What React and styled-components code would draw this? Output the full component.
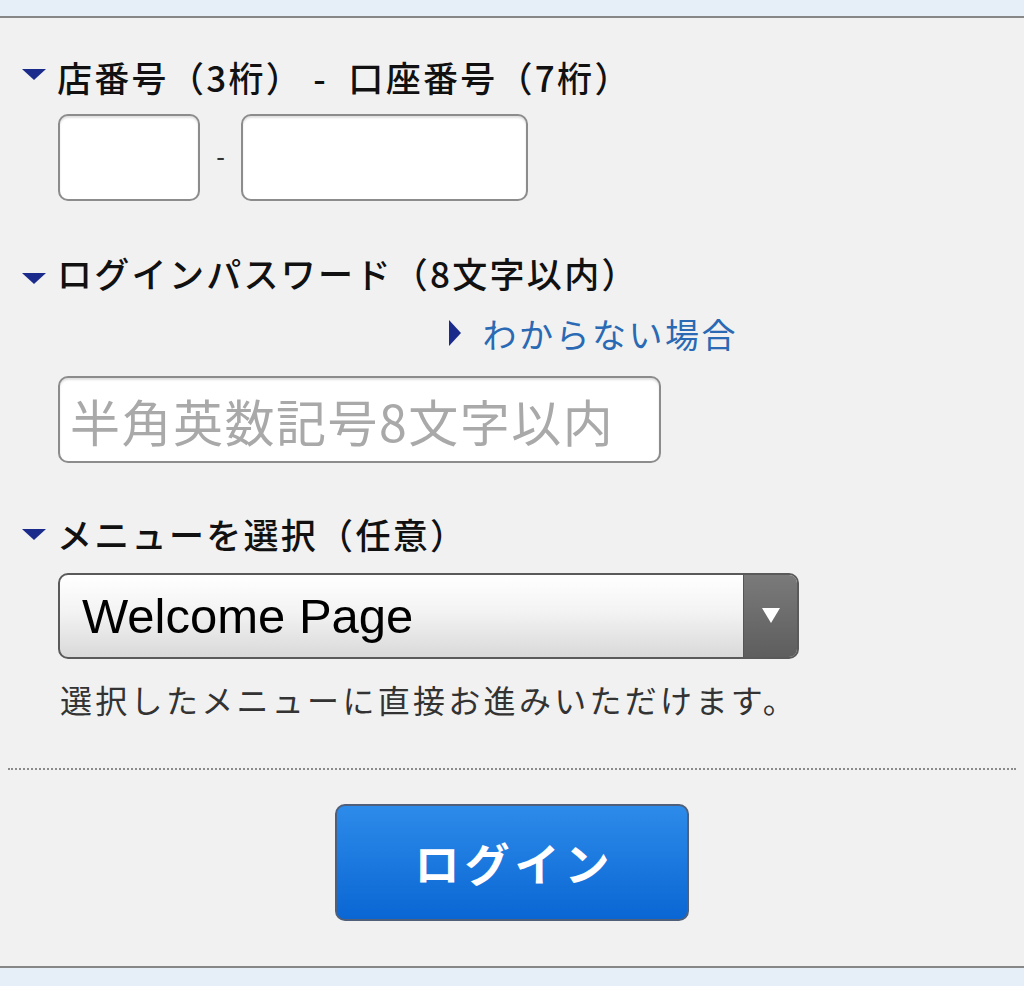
import React from "react";
import styled, { createGlobalStyle } from "styled-components";

const Global = createGlobalStyle`
  html, body { margin: 0; padding: 0; background: #e6eef8; }
  body { font-family: "Noto Sans CJK JP", "Noto Sans", sans-serif; }
  * { box-sizing: border-box; }
`;

const Page = styled.div`
  width: 1024px;
  height: 986px;
  display: flex;
  flex-direction: column;
  background: #e6eef8;
`;

const Band = styled.div`
  height: ${(p) => p.$h}px;
  background: #e6eef8;
  flex: none;
`;

const Panel = styled.div`
  flex: 1;
  background: #f1f1f1;
  border-top: 2px solid #878787;
  border-bottom: 2px solid #878787;
  padding: 38px 8px 0;
  display: flex;
  flex-direction: column;
`;

const Section = styled.div`
  display: flex;
  flex-direction: column;
  padding-left: 14px;
  margin-top: ${(p) => p.$mt || 0}px;
`;

const Heading = styled.div`
  display: flex;
  align-items: center;
  height: 40px;
  font-family: "Noto Sans CJK JP", serif;
  font-size: 35px;
  font-weight: 500;
  color: #111;
  letter-spacing: 2.3px;
  white-space: pre;
`;

const Tri = styled.svg`
  width: 24px;
  height: 12px;
  flex: none;
  margin-right: 11px;
  margin-top: ${(p) => p.$drop || 0}px;
`;

const Marker = ({ drop }) => (
  <Tri viewBox="0 0 24 12" $drop={drop}>
    <polygon points="0,0 24,0 12,11" fill="#1b2b8c" />
  </Tri>
);

const Row = styled.div`
  display: flex;
  align-items: center;
  margin-top: ${(p) => p.$mt || 0}px;
  padding-left: 36px;
`;

const Field = styled.div`
  width: ${(p) => p.$w}px;
  height: 87px;
  background: #fff;
  border: 2px solid #8c8c8c;
  border-radius: 10px;
  box-shadow: inset 0 2px 2px rgba(0, 0, 0, 0.12);
  display: flex;
  align-items: center;
  padding-left: 10px;
  font-size: 50px;
  color: #a9a9a9;
  white-space: nowrap;
  letter-spacing: 1.5px;
`;

const Dash = styled.span`
  width: 41px;
  text-align: center;
  font-size: 26px;
  color: #333;
  font-family: "Liberation Sans", sans-serif;
`;

const LinkRow = styled.div`
  display: flex;
  justify-content: flex-end;
  align-items: center;
  width: 716px;
  height: 40px;
  margin-top: 21px;
`;

const LinkText = styled.a`
  display: flex;
  align-items: center;
  color: #2a69b3;
  font-size: 34px;
  letter-spacing: 2.5px;
  text-decoration: none;
`;

const SmallTri = styled.svg`
  width: 12px;
  height: 26px;
  margin-right: 22px;
`;

const Select = styled.div`
  width: 741px;
  height: 86px;
  border: 2px solid #5a5a5a;
  border-radius: 10px;
  background: linear-gradient(#ffffff 0%, #f3f3f3 45%, #d9d9d9 100%);
  display: flex;
  overflow: hidden;
`;

const SelectLabel = styled.div`
  flex: 1;
  display: flex;
  align-items: center;
  padding-left: 22px;
  font-family: "Liberation Sans", Arial, sans-serif;
  font-size: 49px;
  color: #000;
`;

const SelectArrow = styled.div`
  width: 54px;
  border-left: 1px solid #555;
  background: linear-gradient(#7a7a7a, #5e5e5e);
  display: flex;
  align-items: center;
  justify-content: center;
`;

const Help = styled.div`
  margin-top: 20px;
  padding-left: 38px;
  height: 40px;
  display: flex;
  align-items: center;
  font-size: 32px;
  color: #333;
  letter-spacing: 3.3px;
  white-space: nowrap;
`;

const Divider = styled.hr`
  margin: 49px 0 0;
  border: none;
  border-top: 2px dotted #8a8a8a;
  width: 1008px;
  height: 0;
`;

const ButtonWrap = styled.div`
  display: flex;
  justify-content: center;
  margin-top: 34px;
`;

const LoginButton = styled.button`
  width: 354px;
  height: 117px;
  border: 2px solid #50607a;
  border-radius: 10px;
  background: linear-gradient(#2d8bea, #0a66d3);
  color: #fff;
  font-family: "Noto Sans CJK JP", sans-serif;
  font-size: 45px;
  font-weight: 700;
  letter-spacing: 5px;
  cursor: pointer;
  padding: 0 0 0 5px;
`;

export default function App() {
  return (
    <Page>
      <Global />
      <Band $h={16} />
      <Panel>
        <Section>
          <Heading>
            <Marker drop={-2} />
            {"店番号（3桁） -  口座番号（7桁）"}
          </Heading>
          <Row $mt={18}>
            <Field $w={142} />
            <Dash>-</Dash>
            <Field $w={287} />
          </Row>
        </Section>

        <Section $mt={51}>
          <Heading>
            <Marker drop={14} />
            ログインパスワード（8文字以内）
          </Heading>
          <LinkRow>
            <LinkText href="#">
              <SmallTri viewBox="0 0 12 26">
                <polygon points="0,0 12,13 0,26" fill="#1b2b8c" />
              </SmallTri>
              わからない場合
            </LinkText>
          </LinkRow>
          <Row $mt={23}>
            <Field $w={603}>半角英数記号8文字以内</Field>
          </Row>
        </Section>

        <Section $mt={50}>
          <Heading>
            <Marker drop={4} />
            メニューを選択（任意）
          </Heading>
          <Row $mt={20}>
            <Select>
              <SelectLabel>Welcome Page</SelectLabel>
              <SelectArrow>
                <svg width="18" height="16" viewBox="0 0 18 16">
                  <polygon points="0,0 18,0 9,15" fill="#fff" />
                </svg>
              </SelectArrow>
            </Select>
          </Row>
          <Help>選択したメニューに直接お進みいただけます。</Help>
        </Section>

        <Divider />

        <ButtonWrap>
          <LoginButton>ログイン</LoginButton>
        </ButtonWrap>
      </Panel>
      <Band $h={18} />
    </Page>
  );
}
